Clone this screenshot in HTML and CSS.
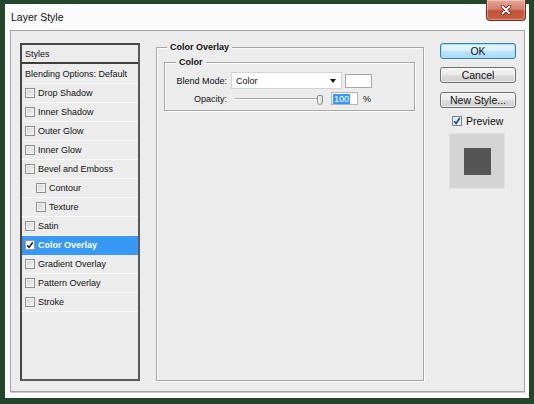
FILE: index.html
```html
<!DOCTYPE html>
<html>
<head>
<meta charset="utf-8">
<title>Layer Style</title>
<link rel="stylesheet" href="styles.css">
</head>
<body>
<div class="screen">
  <div class="window">
    <div class="titlebar">
      <span class="title">Layer Style</span>
      <button class="close" aria-label="Close">
        <svg width="12" height="10" viewBox="0 0 12 10">
          <path d="M2.5 1.5 L9.5 8.5 M9.5 1.5 L2.5 8.5" stroke="#5a1a12" stroke-width="3.4" stroke-linecap="round" fill="none"/>
          <path d="M2.5 1.5 L9.5 8.5 M9.5 1.5 L2.5 8.5" stroke="#ffffff" stroke-width="1.9" stroke-linecap="round" fill="none"/>
        </svg>
      </button>
    </div>
    <div class="panel">
      <div class="styles-list">
        <div class="list-head">Styles</div>
        <div class="list-blend">Blending Options: Default</div>
        <div class="item"><span class="cb"></span>Drop Shadow</div>
        <div class="item"><span class="cb"></span>Inner Shadow</div>
        <div class="item"><span class="cb"></span>Outer Glow</div>
        <div class="item"><span class="cb"></span>Inner Glow</div>
        <div class="item"><span class="cb"></span>Bevel and Emboss</div>
        <div class="item sub"><span class="cb"></span>Contour</div>
        <div class="item sub"><span class="cb"></span>Texture</div>
        <div class="item"><span class="cb"></span>Satin</div>
        <div class="item active"><span class="cb checked"><svg width="8" height="8" viewBox="0 0 8 8"><path d="M1.2 4.2 L3.1 6.4 L6.8 1.2" stroke="#1b1b1b" stroke-width="1.5" fill="none"/></svg></span>Color Overlay</div>
        <div class="item"><span class="cb"></span>Gradient Overlay</div>
        <div class="item"><span class="cb"></span>Pattern Overlay</div>
        <div class="item"><span class="cb"></span>Stroke</div>
      </div>

      <fieldset class="group">
        <legend>Color Overlay</legend>
        <fieldset class="subgroup">
          <legend>Color</legend>
          <div class="form">
            <span class="lbl">Blend Mode:</span>
            <div class="ctrl-row">
              <div class="select"><span class="select-val">Color</span><span class="arrow"></span></div>
              <div class="swatch"></div>
            </div>
            <span class="lbl">Opacity:</span>
            <div class="ctrl-row opacity">
              <div class="track"></div>
              <span class="thumb"></span>
              <div class="num"><span class="sel">100</span></div>
              <span class="pct">%</span>
            </div>
          </div>
        </fieldset>
      </fieldset>

      <div class="actions">
        <button class="btn default">OK</button>
        <button class="btn">Cancel</button>
        <button class="btn">New Style...</button>
        <div class="preview-check">
          <span class="pcb"><svg width="8" height="8" viewBox="0 0 8 8"><path d="M1.2 4.3 L3.1 6.5 L6.8 1" stroke="#1e3f78" stroke-width="1.6" fill="none"/></svg></span>
          <span>Preview</span>
        </div>
        <div class="preview-box"><div class="preview-swatch"></div></div>
      </div>
    </div>
  </div>
</div>
</body>
</html>
```
FILE: styles.css
```css
* { box-sizing: border-box; }
html, body { margin: 0; padding: 0; }
body {
  width: 534px;
  height: 404px;
  overflow: hidden;
  font-family: "Liberation Sans", Arial, sans-serif;
  color: #111;
}
.screen {
  width: 534px;
  height: 404px;
  background: #23462b;
  padding: 4px 0 0 5px;
}
.window {
  position: relative;
  width: 524px;
  height: 394px;
  background: #fbfbfb;
  display: flex;
  flex-direction: column;
}
.titlebar {
  height: 26px;
  display: flex;
  align-items: center;
  padding-left: 6px;
  padding-bottom: 1px;
}
.title {
  font-size: 10.5px;
  color: #111;
}
.close {
  position: absolute;
  top: -4px;
  right: 3px;
  width: 40px;
  height: 21px;
  padding: 0;
  border: 1px solid #6e2c22;
  border-top: none;
  border-radius: 0 0 4px 4px;
  background: linear-gradient(#e9a797 0%, #d7806e 45%, #c5523c 55%, #c9603f 100%);
  box-shadow: inset 0 0 0 1px rgba(255,255,255,0.35);
  display: flex;
  align-items: center;
  justify-content: center;
}
.panel {
  margin-left: 5px;
  width: 515px;
  height: 362px;
  border: 1px solid #a3a3a3;
  background: #ececec;
  display: flex;
  align-items: flex-start;
  padding: 12px 0 0 9px;
  box-shadow: 0 1px 0 #c9c9c9;
}

/* Styles list */
.styles-list {
  width: 120px;
  height: 338px;
  border: 2px solid #464646;
  border-right-color: #5a5a5a;
  border-bottom-color: #5a5a5a;
  background: #ececec;
  font-size: 9px;
  display: flex;
  flex-direction: column;
}
.list-head {
  height: 19px;
  border-bottom: 2px solid #3e3e3e;
  padding-left: 3px;
  display: flex;
  align-items: center;
}
.list-blend {
  height: 20px;
  border-bottom: 1px solid #f8f8f8;
  padding-left: 3px;
  display: flex;
  align-items: center;
}
.item {
  height: 19px;
  border-bottom: 1px solid #f8f8f8;
  padding-left: 3px;
  display: flex;
  align-items: center;
  gap: 3px;
}
.item.sub { padding-left: 14px; }
.item.active {
  background: #3798f6;
  color: #fff;
  font-weight: bold;
  border-bottom-color: #3798f6;
}
.cb {
  width: 10px;
  height: 10px;
  border: 1px solid #8f8f8f;
  background: linear-gradient(135deg, #d2d2d2 0%, #e6e6e6 60%, #f4f4f4 100%);
  box-shadow: inset 0 0 0 1px #f2f2f2;
  display: flex;
  align-items: center;
  justify-content: center;
  flex: none;
}
.cb.checked {
  background: #fdfdfd;
  border-color: #9a9a9a;
  box-shadow: none;
}

/* Group boxes */
.group {
  margin: -2px 0 0 16px;
  width: 268px;
  height: 340px;
  padding: 3px 7px 0 7px;
  border: 1px solid #a7a7a7;
  box-shadow: inset 1px 1px 0 #fdfdfd, 1px 1px 0 #fdfdfd;
  min-width: 0;
}
.group > legend {
  font-size: 9px;
  font-weight: bold;
  line-height: 12px;
  padding: 0 3px;
  margin-left: 3px;
  background: #ececec;
}
.subgroup {
  margin: 0;
  width: 251px;
  padding: 4px 0 5px 0;
  border: 1px solid #a7a7a7;
  box-shadow: inset 1px 1px 0 #fdfdfd, 1px 1px 0 #fdfdfd;
  min-width: 0;
}
.subgroup > legend {
  font-size: 9px;
  font-weight: bold;
  line-height: 12px;
  padding: 0 3px;
  margin-left: 11px;
  background: #ececec;
}
.form {
  display: grid;
  grid-template-columns: 62px auto;
  column-gap: 4px;
  row-gap: 3px;
  font-size: 9px;
  align-items: center;
}
.lbl { text-align: right; }
.ctrl-row {
  display: flex;
  align-items: center;
}
.select {
  width: 111px;
  height: 17px;
  background: #fff;
  border: 1px solid #d4d4d4;
  display: flex;
  align-items: center;
  justify-content: space-between;
  padding: 0 5px 0 4px;
}
.arrow {
  width: 0;
  height: 0;
  border-left: 3.5px solid transparent;
  border-right: 3.5px solid transparent;
  border-top: 4px solid #111;
  margin-top: 1px;
}
.swatch {
  width: 27px;
  height: 14px;
  margin-left: 3px;
  background: #fff;
  border: 1px solid #a9a9a9;
}
.opacity { height: 13px; padding-left: 4px; }
.track {
  width: 82px;
  height: 2px;
  border-top: 1px solid #a3a3a3;
  border-bottom: 1px solid #fdfdfd;
}
.thumb {
  width: 6px;
  height: 10px;
  border: 1px solid #8c8c8c;
  border-radius: 2px 2px 3px 3px;
  background: linear-gradient(90deg, #fafafa, #d8d8d8);
  margin-top: 2px;
}
.num {
  margin-left: 8px;
  width: 27px;
  height: 13px;
  background: #fff;
  border: 1px solid #b5b5b5;
  display: flex;
  align-items: center;
  padding-left: 1px;
}
.sel {
  background: #3399ff;
  color: #fff;
  line-height: 10px;
  padding: 0 1px;
}
.pct { margin-left: 5px; }

/* Actions */
.actions {
  margin-left: 16px;
  width: 76px;
  display: flex;
  flex-direction: column;
  align-items: flex-start;
}
.btn {
  width: 76px;
  height: 16px;
  padding: 0;
  font-family: "Liberation Sans", Arial, sans-serif;
  font-size: 10.5px;
  line-height: 14px;
  color: #111;
  border: 1px solid #707070;
  border-radius: 3px;
  background: linear-gradient(#f3f3f3 0%, #ebebeb 48%, #dddddd 52%, #cfcfcf 100%);
  box-shadow: inset 0 0 0 1px rgba(255,255,255,0.6);
  margin-bottom: 8px;
}
.btn:nth-child(2) { margin-bottom: 9px; }
.btn.default {
  border-color: #3c7fb1;
  background: linear-gradient(#eaf6fd 0%, #d9f0fc 48%, #bee6fd 52%, #a7d9f5 100%);
  box-shadow: inset 0 0 0 1px #9de3fa;
}
.preview-check {
  margin-top: -2px;
  padding-left: 12px;
  height: 14px;
  display: flex;
  align-items: center;
  gap: 4px;
  font-size: 10.5px;
}
.pcb {
  width: 10px;
  height: 10px;
  border: 1px solid #6d84a8;
  background: linear-gradient(135deg, #dfe8f5, #f6f9fd);
  display: flex;
  align-items: center;
  justify-content: center;
}
.preview-box {
  margin: 5px 0 0 9px;
  width: 56px;
  height: 56px;
  background: #d4d4d4;
  border: 1px solid #e2e2e2;
  display: flex;
  align-items: center;
  justify-content: center;
}
.preview-swatch {
  width: 27px;
  height: 27px;
  background: #555555;
}
```
